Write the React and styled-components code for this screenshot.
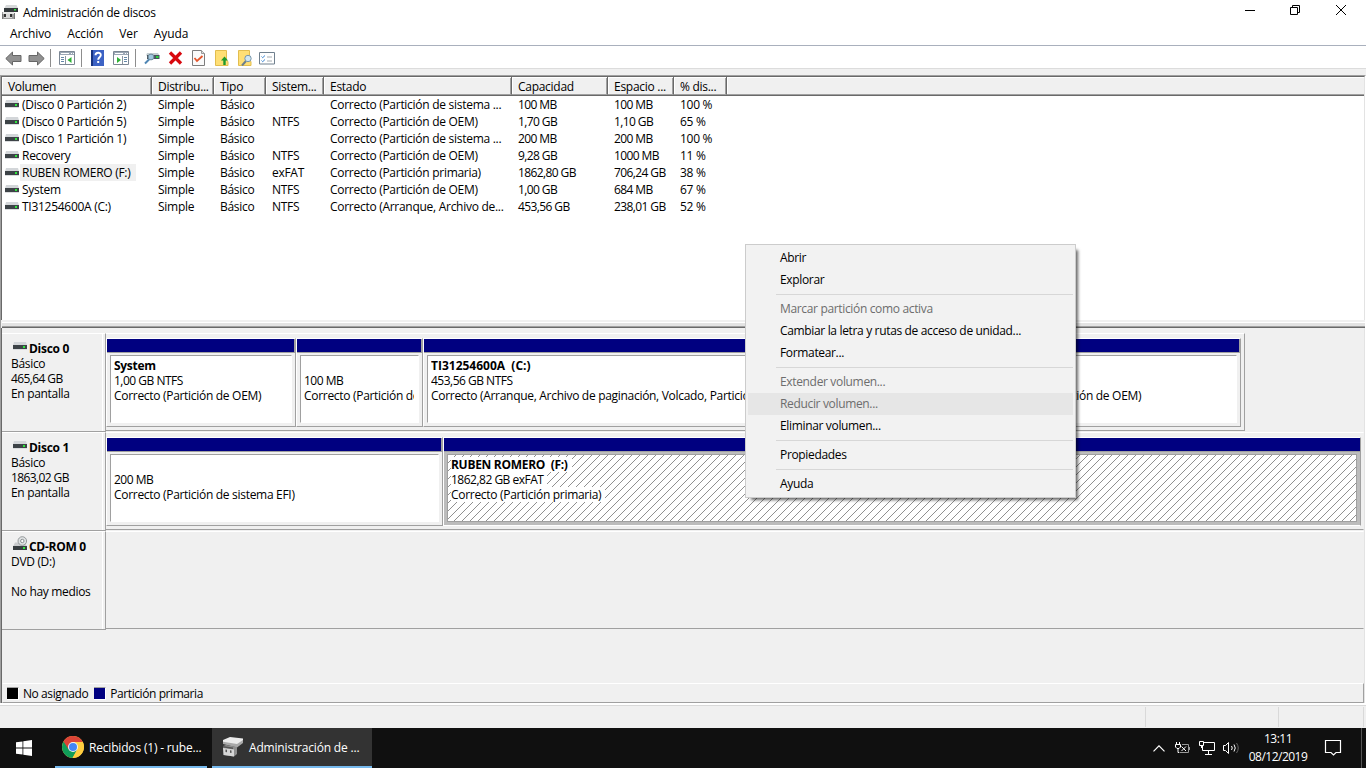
import React from "react";
import styled, { createGlobalStyle, css } from "styled-components";

const Global = createGlobalStyle`
  * { box-sizing: border-box; }
  html, body { margin: 0; height: 100%; overflow: hidden; }
  body { font: 12px/15px "Open Sans", "Noto Sans", sans-serif; letter-spacing: -0.28px; color: #000; background: #f0f0f0; }
  svg { display: block; flex: none; }
`;

const Desktop = styled.div`
  position: relative;
  width: 1366px;
  height: 768px;
  display: flex;
  flex-direction: column;
  background: #f0f0f0;
  white-space: nowrap;
  overflow: hidden;
`;
const TitleBar = styled.header`
  height: 24px;
  flex: none;
  display: flex;
  align-items: center;
  padding-left: 2px;
  gap: 5px;
  background: #fff;
`;
const WindowButtons = styled.div`
  margin-left: auto;
  display: flex;
  height: 24px;
  padding-right: 2px;
`;
const WindowButton = styled.div`
  width: 46px;
  height: 20px;
  display: grid;
  place-items: center;
`;
const MenuBar = styled.nav`
  height: 22px;
  flex: none;
  display: flex;
  padding: 2px 10px 0;
  gap: 16px;
  letter-spacing: -0.1px;
  background: #fff;
  border-bottom: 1px solid #a9b0bd;
`;
const Toolbar = styled.div`
  height: 23px;
  flex: none;
  display: flex;
  align-items: center;
  padding: 2px 5px 0;
  background: #fff;
  border-bottom: 1px solid #dcdcdc;
`;
const ToolIcon = styled.div`
  margin-left: ${(p) => p.$gap}px;
`;
const ToolDivider = styled.i`
  width: 1px;
  height: 18px;
  margin-left: ${(p) => p.$gap}px;
  background: #8d8d8d;
`;
const Main = styled.main`
  height: 628px;
  flex: none;
  display: flex;
  flex-direction: column;
  margin-top: 6px;
  border-left: 1px solid #a0a0a0;
  border-top: 1px solid #a0a0a0;
  border-right: 1px solid #fff;
`;
const VolumeList = styled.section`
  height: 244px;
  flex: none;
  border-left: 1px solid #696969;
  border-top: 1px solid #696969;
  border-right: 1px solid #e3e3e3;
  background: #fff;
`;
const columns = css`
  display: grid;
  grid-template-columns: 150px 62px 52px 58px 188px 96px 66px 53px 1fr;
`;
const HeaderRow = styled.div`
  ${columns}
  height: 19px;
  border-bottom: 1px solid #696969;
`;
const HeaderCell = styled.div`
  padding: 2px 0 0 6px;
  background: #f0f0f0;
  border-right: 1px solid #696969;
  border-bottom: 1px solid #a0a0a0;
  box-shadow: inset 1px 1px #fff, inset -1px 0 #a0a0a0;
  &:last-child { border-right: 0; box-shadow: inset 1px 1px #fff; }
`;
const VolumeRow = styled.div`
  ${columns}
  height: 17px;
`;
const Cell = styled.div`
  padding-left: 6px;
  line-height: 17px;
  letter-spacing: ${(p) => (p.$numeric ? -0.6 : -0.28)}px;
`;
const NameCell = styled.div`
  display: flex;
  align-items: center;
  padding-left: 3px;
`;
const VolumeName = styled.span`
  height: 17px;
  line-height: 17px;
  margin-left: 1px;
  padding: 0 6px 0 2px;
  background: ${(p) => (p.$selected ? "#f0f0f0" : "transparent")};
`;
const Splitter = styled.div`
  height: 8px;
  flex: none;
  margin-left: 1px;
  border: solid;
  border-width: 2px 0 1px;
  border-color: #f0f0f0 #696969 #696969;
  background: linear-gradient(#fff 1px, #e3e3e3 1px 4px, #a0a0a0 4px);
`;
const DiskArea = styled.section`
  flex: 1;
  border-left: 1px solid #696969;
  border-right: 1px solid #e3e3e3;
  padding-top: 5px;
  display: flex;
  flex-direction: column;
`;
const DiskRow = styled.div`
  height: 99px;
  flex: none;
  display: flex;
`;
const DiskLabel = styled.div`
  width: 104px;
  height: 99px;
  padding: 7px 0 0 9px;
  border-top: 1px solid #fff;
  border-right: 1px solid #a0a0a0;
  border-bottom: 1px solid #a0a0a0;
  box-shadow: inset -2px 0 #f0f0f0, inset -3px 0 #fff;
`;
const DiskTitle = styled.div`
  display: flex;
  gap: 2px;
  height: 15px;
  padding-left: 2px;
  font-weight: 700;
  svg { margin-top: ${(p) => (p.$cd ? -3 : 1)}px; }
`;
const DiskInfo = styled.div`
  min-height: 15px;
  letter-spacing: ${(p) => (p.$numeric ? -0.6 : -0.32)}px;
`;
const Partitions = styled.div`
  width: ${(p) => p.$w}px;
  height: 98px;
  border-top: 1px solid #fff;
  border-right: 1px solid ${(p) => (p.$open ? "transparent" : "#a0a0a0")};
  border-bottom: 1px solid #a0a0a0;
  padding: ${(p) => (p.$empty ? 0 : "4px 3px 3px 0")};
  display: flex;
`;
const Partition = styled.div`
  width: ${(p) => p.$w}px;
  flex: none;
  display: flex;
  flex-direction: column;
  border: 1px solid;
  border-color: #fff #a0a0a0 ${(p) => (p.$selected ? "#fff" : "#a0a0a0")} #fff;
  background: ${(p) => (p.$selected ? "#bcbcbc" : "#f0f0f0")};
`;
const Stripe = styled.div`
  height: 14px;
  background: #000080;
  border-bottom: 1px solid #a0a0a0;
  border-right: ${(p) => (p.$selected ? 0 : 1)}px solid #a0a0a0;
`;
const hatch = css`
  border-color: #a0a0a0;
  background: repeating-linear-gradient(135deg, #fff 0 4.95px, #909090 4.95px 5.657px);
`;
const PartitionBody = styled.div`
  flex: 1;
  margin: 2px 3px 3px;
  padding: 2px 4px 0 3px;
  overflow: hidden;
  background: #fff;
  border: 1px solid;
  border-color: #a0a0a0 #fff #fff #a0a0a0;
  ${(p) => p.$selected && hatch}
`;
const Line = styled.div`
  width: fit-content;
  max-width: 100%;
  height: 15px;
  padding-right: 4px;
  overflow: hidden;
  background: #fff;
  font-weight: ${(p) => (p.$bold ? 700 : 400)};
  letter-spacing: ${(p) => p.$track ?? -0.3}px;
  white-space: pre;
`;
const Legend = styled.div`
  margin-top: auto;
  height: 20px;
  border: 1px solid;
  border-color: #fff #a0a0a0 #a0a0a0 #f0f0f0;
  display: flex;
  align-items: center;
  padding-left: 4px;
`;
const Swatch = styled.i`
  width: 12px;
  height: 13px;
  margin-right: 4px;
  background: ${(p) => p.$color};
  border: 1px solid;
  border-color: #a0a0a0 #fff #fff #a0a0a0;
  border-width: 1px 1px 1px 0;
`;
const LegendText = styled.span`
  margin-right: 6px;
  letter-spacing: -0.42px;
`;
const StatusBar = styled.footer`
  height: 23px;
  flex: none;
  margin-top: 2px;
  padding: 1px 2px 1px 0;
  display: flex;
  justify-content: flex-end;
  border-top: 1px solid #d9d9d9;
  box-shadow: 0 -2px #fff;
`;
const StatusPane = styled.div`
  width: ${(p) => p.$w}px;
  border-left: ${(p) => (p.$first ? "1px solid #d9d9d9" : 0)};
  border-right: 1px solid #d9d9d9;
`;
const TaskBar = styled.div`
  height: 40px;
  flex: none;
  display: flex;
  background: #101010;
  color: #fff;
`;
const Start = styled.div`
  width: 55px;
  padding: 12px 0 0 16px;
`;
const Task = styled.div`
  width: ${(p) => p.$w}px;
  margin-right: 5px;
  padding-left: ${(p) => (p.$active ? 10 : 7)}px;
  display: flex;
  align-items: center;
  gap: 5px;
  letter-spacing: -0.18px;
  border-bottom: 2px solid #76b9ed;
  background: ${(p) => (p.$active ? "#333" : "transparent")};
`;
const Tray = styled.div`
  margin-left: auto;
  display: flex;
  align-items: center;
  padding-right: 2px;
`;
const TrayIcon = styled.div`
  margin-right: ${(p) => p.$gap}px;
`;
const Clock = styled.div`
  width: 60px;
  text-align: center;
  line-height: 18px;
  letter-spacing: -0.52px;
`;
const ShowDesktop = styled.div`
  width: 5px;
  border-left: 1px solid #555;
`;
const ContextMenu = styled.div`
  position: absolute;
  left: 745px;
  top: 244px;
  width: 331px;
  height: 254px;
  padding: 2px;
  letter-spacing: -0.34px;
  background: #f2f2f2;
  border: 1px solid #ccc;
  box-shadow: 4px 4px 3px -2px rgba(0, 0, 0, 0.6);
`;
const MenuItem = styled.div`
  height: 22px;
  line-height: 22px;
  padding-left: 32px;
  color: ${(p) => (p.$disabled ? "#6d6d6d" : "#000")};
  background: ${(p) => (p.$hover ? "#e6e6e6" : "transparent")};
`;
const MenuRule = styled.div`
  height: 1px;
  margin: 3px 0 3px 28px;
  background: #d7d7d7;
`;

const DriveIcon = () => (
  <svg width="14" height="9" viewBox="0 0 14 9">
    <path d="M1 0h12l1 3.500H0z" fill="#d3d6d9" />
    <path d="M0 3h14v4H0z" fill="#3d4347" />
    <path d="M0 7h14v1H0z" fill="#dadcde" />
    <path d="M10 4h2v2h-2z" fill="#2ee83c" />
  </svg>
);
const CdIcon = () => (
  <svg width="14" height="15" viewBox="0 0 14 15">
    <path d="M2 6.500h10l2 4H0z" fill="#c9cbcd" />
    <circle cx="9.300" cy="5" r="4.300" fill="#dfe2e3" stroke="#8d9294" strokeWidth=".9" />
    <circle cx="9.300" cy="5" r="1.700" fill="#fff" stroke="#8a8f91" />
    <path d="M0 10h14v4H0z" fill="#373d40" />
    <path d="M10 11h2v2h-2z" fill="#2ee83c" />
  </svg>
);
const AppIcon = () => (
  <svg width="16" height="16" viewBox="0 0 16 16">
    <path d="M4 1h10.500L16 4H2.500z" fill="#d6d8d9" />
    <path d="M2 4h14v4H2z" fill="#34393c" />
    <path d="M12 5h2v1.500h-2z" fill="#35e643" />
    <path d="M0 8h12v7H0z" fill="#9d9d9d" />
    <path d="M1 8h11v2H1z" fill="#e6e6e6" />
    <path d="M0 10h1v5H0zM12 9h1v6h-1z" fill="#777" />
    <path d="M2 10h8v4H2z" fill="#d9d9d9" />
    <path d="M2 10h2v3H2zM8 10h2v3H8z" fill="#333" />
  </svg>
);
const Arrow = ({ flip }) => (
  <svg width="17" height="15" viewBox="0 0 17 15">
    <path
      transform={flip ? "translate(17 0) scale(-1 1)" : undefined}
      d="M.8 7.500L7.500 1v3.500H16v6H7.500V14z"
      fill="#919191"
      stroke="#666"
      strokeLinejoin="round"
    />
  </svg>
);
const PaneIcon = ({ right }) => (
  <svg width="16" height="14" viewBox="0 0 16 14">
    <path d="M.5.5h15v13H.5z" fill="#fff" stroke="#7c8794" />
    <path d="M1 1h14v3H1z" fill="#9ba7b5" />
    <path d="M2 2.500h8M12 2.500h1M14 2.500h1" stroke="#fff" />
    <path d={right ? "M9.500 5v8" : "M6.500 5v8"} stroke="#8a95a1" />
    <path d={right ? "M11 6.500h3M11 8.500h3M11 10.500h3" : "M2 6.500h3M2 8.500h3M2 10.500h3"} stroke="#6588a8" />
    <path d={right ? "M4 6v6l4-3z" : "M12.500 6v6l-4-3z"} fill="#2eb135" />
  </svg>
);
const HelpIcon = () => (
  <svg width="13" height="16" viewBox="0 0 13 16">
    <path d="M0 0h13v16H0z" fill="#3c62c4" />
    <path d="M0 0h2v16H0z" fill="#17337f" />
    <path d="M4.500 5.300c0-3.300 5.300-3.300 5.300-.2 0 2.200-2.600 2.200-2.600 4.600M6.200 12h2" fill="none" stroke="#fff" strokeWidth="1.900" />
  </svg>
);
const ConnectIcon = () => (
  <svg width="16" height="14" viewBox="0 0 16 14">
    <path d="M3 2h11l1.500 2.500H2z" fill="#c4ced2" />
    <path d="M3 4h12.500v4H3z" fill="#47545c" />
    <path d="M12 5h2.500v2H12z" fill="#29d43d" />
    <path d="M5.500 8L1 12.500" stroke="#4f86b4" strokeWidth="2" />
    <circle cx="7" cy="6" r="2.900" fill="#9fc7df" stroke="#6f8a9b" />
  </svg>
);
const DeleteIcon = () => (
  <svg width="15" height="14" viewBox="0 0 15 14">
    <path d="M2 1.500l11 11M13 1.500l-11 11" stroke="#d8080e" strokeWidth="3.300" />
  </svg>
);
const CheckDoc = () => (
  <svg width="13" height="16" viewBox="0 0 13 16">
    <path d="M.5.500h9l3 3v12H.5z" fill="#fafafa" stroke="#7d7d7d" />
    <path d="M9.500.500v3h3" fill="#ddd" stroke="#999" />
    <path d="M2.500 8l2.500 3 5.500-5" fill="none" stroke="#e4552b" strokeWidth="1.800" />
  </svg>
);
const FolderIcon = ({ search }) => (
  <svg width="14" height="16" viewBox="0 0 14 16">
    <path d="M.5.500h11v10l1.500 1v4H.5z" fill="#ffdf75" stroke="#e2bd4e" />
    {search ? (
      <g>
        <path d="M8 11l-4 4.500" stroke="#6c7f8c" strokeWidth="2" />
        <circle cx="10" cy="8.500" r="3.200" fill="#cfe6f3" stroke="#7895a8" />
      </g>
    ) : (
      <path d="M9.500 6.500L6 10.500h2.300V15h2.400v-4.500H13z" fill="#1f9a2b" />
    )}
  </svg>
);
const ListIcon = () => (
  <svg width="16" height="13" viewBox="0 0 16 13">
    <path d="M.5.500h15v11.500H.5z" fill="#fff" stroke="#70808e" />
    <path d="M8 5h5M8 9h5" stroke="#a4abb0" />
    <path d="M2.500 4.500l1.200 1.200L6 3.500M2.500 8.500l1.200 1.200L6 7.500" fill="none" stroke="#3d87d2" />
  </svg>
);
const WindowsLogo = () => (
  <svg width="16" height="16" viewBox="0 0 16 16" fill="#fff">
    <path d="M0 2.300L6.500 1.400V7.600H0zM7.300 1.300L16 0v7.600H7.300zM0 8.400h6.500v6.200L0 13.700zM7.300 8.400H16V16l-8.700-1.300z" />
  </svg>
);
const ChromeLogo = () => (
  <svg width="22" height="22" viewBox="0 0 22 22">
    <circle cx="11" cy="11" r="11" fill="#ffcd40" />
    <path d="M11 11L1.500 5.500a11 11 0 0 0 9 16.500l4.800-8.500z" fill="#0f9d58" />
    <path d="M11 6h9.800A11 11 0 0 1 10.500 22l4.800-8.500z" fill="#ffcd40" />
    <path d="M1.500 5.500A11 11 0 0 1 20.800 6H11L6.700 13.500z" fill="#db4437" />
    <circle cx="11" cy="11" r="5" fill="#f1f1f1" />
    <circle cx="11" cy="11" r="4" fill="#4285f4" />
  </svg>
);
const DiskTaskIcon = () => (
  <svg width="22" height="20" viewBox="0 0 22 20">
    <path d="M1 4l20-1v3l-6 4.500L1 7z" fill="#a9a9a9" />
    <path d="M8 0l13 1.500v1.500l-6 4L1 4.800V3z" fill="#ececec" />
    <path d="M1 9l3-1 11 2v7l-3 2.500L1 18z" fill="#8f8f8f" />
    <path d="M1 11l11 1.500v7L2 18z" fill="#d6d6d6" />
    <path d="M1 9l10 1.500v1.500L1 10.500z" fill="#555" />
    <path d="M3.500 12.500l1.500.2v2.500l-1.500-.2zM8 13.200l1.500.2v2.500L8 15.700z" fill="#555" />
  </svg>
);

const headers = ["Volumen", "Distribu...", "Tipo", "Sistem...", "Estado", "Capacidad", "Espacio ...", "% dis...", ""];
const volumes = [
  ["(Disco 0 Partición 2)", "", "Correcto (Partición de sistema ...", "100 MB", "100 MB", "100 %"],
  ["(Disco 0 Partición 5)", "NTFS", "Correcto (Partición de OEM)", "1,70 GB", "1,10 GB", "65 %"],
  ["(Disco 1 Partición 1)", "", "Correcto (Partición de sistema ...", "200 MB", "200 MB", "100 %"],
  ["Recovery", "NTFS", "Correcto (Partición de OEM)", "9,28 GB", "1000 MB", "11 %"],
  ["RUBEN ROMERO (F:)", "exFAT", "Correcto (Partición primaria)", "1862,80 GB", "706,24 GB", "38 %"],
  ["System", "NTFS", "Correcto (Partición de OEM)", "1,00 GB", "684 MB", "67 %"],
  ["TI31254600A (C:)", "NTFS", "Correcto (Arranque, Archivo de...", "453,56 GB", "238,01 GB", "52 %"],
];
const disks = [
  {
    name: "Disco 0", lines: ["Básico", "465,64 GB", "En pantalla"], width: 1139,
    parts: [
      { w: 190, title: "System", size: "1,00 GB NTFS", state: "Correcto (Partición de OEM)" },
      { w: 127, size: "100 MB", state: "Correcto (Partición de sistema EFI)" },
      { w: 563, title: "TI31254600A  (C:)", track: 0, size: "453,56 GB NTFS", state: "Correcto (Arranque, Archivo de paginación, Volcado, Partición primaria)" },
      { w: 255, state: "Correcto (Partición de OEM)" },
    ],
  },
  {
    name: "Disco 1", lines: ["Básico", "1863,02 GB", "En pantalla"], width: 1258, open: true,
    parts: [
      { w: 337, size: "200 MB", state: "Correcto (Partición de sistema EFI)" },
      { w: 918, title: "RUBEN ROMERO  (F:)", size: "1862,82 GB exFAT", state: "Correcto (Partición primaria)", selected: true },
    ],
  },
  { name: "CD-ROM 0", lines: ["DVD (D:)", "", "No hay medios"], width: 1258, cd: true, open: true, parts: [] },
];
const menu = [
  { t: "Abrir" }, { t: "Explorar" }, null,
  { t: "Marcar partición como activa", off: true }, { t: "Cambiar la letra y rutas de acceso de unidad..." }, { t: "Formatear..." }, null,
  { t: "Extender volumen...", off: true }, { t: "Reducir volumen...", off: true, hover: true }, { t: "Eliminar volumen..." }, null,
  { t: "Propiedades" }, null, { t: "Ayuda" },
];

export default function App() {
  return (
    <Desktop>
      <Global />
      <TitleBar>
        <AppIcon />
        <span>Administración de discos</span>
        <WindowButtons>
          <WindowButton><svg width="12" height="10"><path d="M2 5.500h10" stroke="#000" /></svg></WindowButton>
          <WindowButton>
            <svg width="10" height="10" fill="none" stroke="#000"><path d="M.5 2.500h7v7h-7zM2.500 2.500v-2h7v7h-2" /></svg>
          </WindowButton>
          <WindowButton><svg width="10" height="10" stroke="#000"><path d="M0 0l10 10M10 0L0 10" /></svg></WindowButton>
        </WindowButtons>
      </TitleBar>
      <MenuBar><span>Archivo</span><span>Acción</span><span>Ver</span><span>Ayuda</span></MenuBar>
      <Toolbar>
        <ToolIcon $gap={0}><Arrow /></ToolIcon>
        <ToolIcon $gap={6}><Arrow flip /></ToolIcon>
        <ToolDivider $gap={5} />
        <ToolIcon $gap={8}><PaneIcon /></ToolIcon>
        <ToolDivider $gap={6} />
        <ToolIcon $gap={9}><HelpIcon /></ToolIcon>
        <ToolIcon $gap={9}><PaneIcon right /></ToolIcon>
        <ToolDivider $gap={6} />
        <ToolIcon $gap={8}><ConnectIcon /></ToolIcon>
        <ToolIcon $gap={8}><DeleteIcon /></ToolIcon>
        <ToolIcon $gap={9}><CheckDoc /></ToolIcon>
        <ToolIcon $gap={10}><FolderIcon /></ToolIcon>
        <ToolIcon $gap={9}><FolderIcon search /></ToolIcon>
        <ToolIcon $gap={7}><ListIcon /></ToolIcon>
      </Toolbar>
      <Main>
        <VolumeList>
          <HeaderRow>{headers.map((h, i) => <HeaderCell key={i}>{h}</HeaderCell>)}</HeaderRow>
          {volumes.map(([name, ...v], i) => (
            <VolumeRow key={name}>
              <NameCell><DriveIcon /><VolumeName $selected={i === 4}>{name}</VolumeName></NameCell>
              <Cell>Simple</Cell>
              <Cell>Básico</Cell>
              {v.map((c, j) => <Cell key={j} $numeric={j === 2 || j === 3}>{c}</Cell>)}
            </VolumeRow>
          ))}
        </VolumeList>
        <Splitter />
        <DiskArea>
          {disks.map((d) => (
            <DiskRow key={d.name}>
              <DiskLabel>
                <DiskTitle $cd={d.cd}>{d.cd ? <CdIcon /> : <DriveIcon />}<span>{d.name}</span></DiskTitle>
                {d.lines.map((l) => <DiskInfo key={l} $numeric={l.endsWith("GB")}>{l}</DiskInfo>)}
              </DiskLabel>
              <Partitions $w={d.width} $open={d.open} $empty={d.cd}>
                {d.parts.map((p, i) => (
                  <Partition key={i} $w={p.w} $selected={p.selected}>
                    <Stripe $selected={p.selected} />
                    <PartitionBody $selected={p.selected}>
                      <Line $bold $track={p.track}>{p.title}</Line>
                      <Line $track={-0.5}>{p.size}</Line>
                      <Line>{p.state}</Line>
                    </PartitionBody>
                  </Partition>
                ))}
              </Partitions>
            </DiskRow>
          ))}
          <Legend>
            <Swatch $color="#000" /><LegendText>No asignado</LegendText>
            <Swatch $color="#000080" /><LegendText>Partición primaria</LegendText>
          </Legend>
        </DiskArea>
      </Main>
      <StatusBar><StatusPane $w={134} $first /><StatusPane $w={85} /></StatusBar>
      <TaskBar>
        <Start><WindowsLogo /></Start>
        <Task $w={152}><ChromeLogo /><span>Recibidos (1) - rube...</span></Task>
        <Task $w={160} $active><DiskTaskIcon /><span>Administración de ...</span></Task>
        <Tray>
          <TrayIcon $gap={10}><svg width="12" height="7" fill="none" stroke="#fff" strokeWidth="1.200"><path d="M.5 6.300L6 .8l5.500 5.500" /></svg></TrayIcon>
          <TrayIcon $gap={8}>
            <svg width="16" height="12" fill="none" stroke="#fff">
              <path d="M1.500 0v3M4.500 0v3M.5 2.500h5v2.500l-1.500 1.500h-2L.5 5zM3 6.500v4h1" />
              <path d="M7 2.500h6.500v8H4.500M14.500 5v3" stroke="#999" />
              <path d="M6.500 4.500l4.500 4.500M11 4.500L6.500 9" />
            </svg>
          </TrayIcon>
          <TrayIcon $gap={8}>
            <svg width="16" height="14" fill="none" stroke="#fff"><path d="M5 1.500h10.500v8H3.500V5M.5.500h4v4h-4zM2.500 5v2M9.500 10v3M6 13.500h7" /></svg>
          </TrayIcon>
          <TrayIcon $gap={8}>
            <svg width="17" height="14" fill="none" stroke="#fff">
              <path d="M.5 4.500h2L5.500 1.500v11l-3-3h-2zM8.500 5q1.500 2 0 4M11 3.500q2.500 3.500 0 7" />
              <path d="M13.500 2q3.500 5 0 10" stroke="#666" />
            </svg>
          </TrayIcon>
          <Clock>13:11<br />08/12/2019</Clock>
        </Tray>
        <TrayIcon $gap={19}>
          <svg width="32" height="40" fill="none" stroke="#fff" strokeWidth="1.200"><path d="M15.500 12.500h15v12H26L23.500 27 21 24.500h-5.500z" /></svg>
        </TrayIcon>
        <ShowDesktop />
      </TaskBar>
      <ContextMenu>
        {menu.map((m, i) => (m ? <MenuItem key={i} $disabled={m.off} $hover={m.hover}>{m.t}</MenuItem> : <MenuRule key={i} />))}
      </ContextMenu>
    </Desktop>
  );
}
